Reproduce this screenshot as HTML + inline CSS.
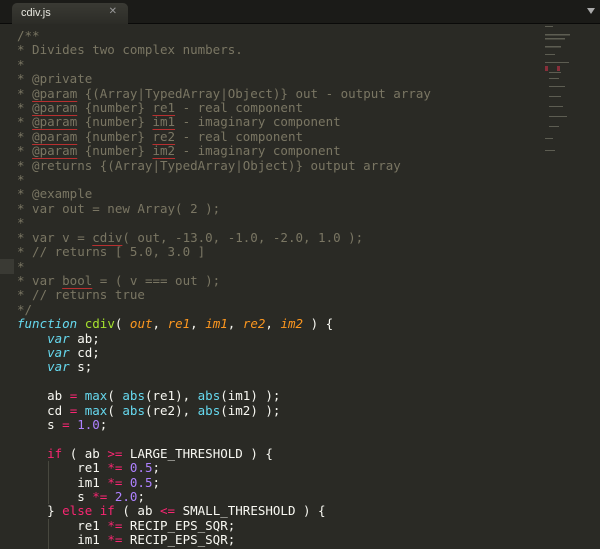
<!DOCTYPE html>
<html><head><meta charset="utf-8"><style>
html,body{margin:0;padding:0;width:600px;height:549px;overflow:hidden;background:#2a2a25;}
#tabbar{position:absolute;left:0;top:0;width:600px;height:23px;background:#1b1b18;border-bottom:1px solid #0a0a09;}
#tab{position:absolute;left:12px;top:3px;width:116px;height:21px;background:linear-gradient(#3a3a34,#2c2c27);border-radius:5px 5px 0 0;}
#tab span{position:absolute;left:9px;top:4px;font:11px "Liberation Sans",sans-serif;color:#e8e8e0;}
#tab b{position:absolute;right:11px;top:3px;font:10px "DejaVu Sans",sans-serif;color:#999;font-weight:normal;}
#arrow{position:absolute;left:587px;top:8px;width:0;height:0;border-left:4px solid transparent;border-right:4px solid transparent;border-top:6px solid #aaa;}
#code{position:absolute;left:17px;top:29px;font:12.5px/14.4px "DejaVu Sans Mono",monospace;color:#f8f8f2;white-space:pre;margin:0;}
.c{color:#7a7663}.k{color:#66d9ef;font-style:italic}.f{color:#a6e22e}.p{color:#fd971f;font-style:italic}
.o{color:#f92672}.n{color:#ae81ff}.b{color:#66d9ef}
.u{text-decoration:underline solid #b83030;text-decoration-thickness:1px;text-underline-offset:3px}
#hl{position:absolute;left:0;top:259px;width:14px;height:15px;background:#3a3a34;}
.guide{position:absolute;left:48px;width:1px;background:#48483f;}
#mm{position:absolute;left:543px;top:26px;width:30px;height:130px;opacity:.8}
</style></head><body>
<div id="tabbar"><div id="tab"><span>cdiv.js</span><b>✕</b></div><div id="arrow"></div></div>
<div id="hl"></div>
<div class="guide" style="top:461px;height:43px"></div>
<div class="guide" style="top:519px;height:30px"></div>
<svg id="mm" viewBox="0 0 30 130">
<g fill="#6a6a5e">
<rect x="2" y="0" width="8" height="1"/><rect x="2" y="8" width="25" height="1.5"/><rect x="2" y="12" width="20" height="1.5"/><rect x="2" y="20" width="16" height="1.5"/>
<rect x="2" y="28" width="10" height="1"/><rect x="2" y="36" width="24" height="1"/><rect x="6" y="46" width="12" height="1"/><rect x="6" y="52" width="10" height="1"/>
<rect x="6" y="60" width="16" height="1"/><rect x="6" y="70" width="12" height="1"/><rect x="6" y="80" width="14" height="1"/><rect x="6" y="90" width="18" height="1"/><rect x="6" y="100" width="10" height="1"/><rect x="2" y="112" width="8" height="1"/><rect x="2" y="124" width="10" height="1"/></g>
<rect x="2" y="40" width="3" height="5" fill="#a03040"/><rect x="14" y="40" width="3" height="5" fill="#a03040"/>
</svg>
<pre id="code"><span class="c">/**
* Divides two complex numbers.
*
* @private
* <span class="u">@param</span> {(Array|TypedArray|Object)} out - output array
* <span class="u">@param</span> {number} <span class="u">re1</span> - real component
* <span class="u">@param</span> {number} <span class="u">im1</span> - imaginary component
* <span class="u">@param</span> {number} <span class="u">re2</span> - real component
* <span class="u">@param</span> {number} <span class="u">im2</span> - imaginary component
* @returns {(Array|TypedArray|Object)} output array
*
* @example
* var out = new Array( 2 );
*
* var v = <span class="u">cdiv</span>( out, -13.0, -1.0, -2.0, 1.0 );
* // returns [ 5.0, 3.0 ]
*
* var <span class="u">bool</span> = ( v === out );
* // returns true
*/</span>
<span class="k">function</span> <span class="f">cdiv</span>( <span class="p">out</span>, <span class="p">re1</span>, <span class="p">im1</span>, <span class="p">re2</span>, <span class="p">im2</span> ) {
    <span class="k">var</span> ab;
    <span class="k">var</span> cd;
    <span class="k">var</span> s;

    ab <span class="o">=</span> <span class="b">max</span>( <span class="b">abs</span>(re1), <span class="b">abs</span>(im1) );
    cd <span class="o">=</span> <span class="b">max</span>( <span class="b">abs</span>(re2), <span class="b">abs</span>(im2) );
    s <span class="o">=</span> <span class="n">1.0</span>;

    <span class="o">if</span> ( ab <span class="o">&gt;=</span> LARGE_THRESHOLD ) {
        re1 <span class="o">*=</span> <span class="n">0.5</span>;
        im1 <span class="o">*=</span> <span class="n">0.5</span>;
        s <span class="o">*=</span> <span class="n">2.0</span>;
    } <span class="o">else if</span> ( ab <span class="o">&lt;=</span> SMALL_THRESHOLD ) {
        re1 <span class="o">*=</span> RECIP_EPS_SQR;
        im1 <span class="o">*=</span> RECIP_EPS_SQR;</pre>
</body></html>
